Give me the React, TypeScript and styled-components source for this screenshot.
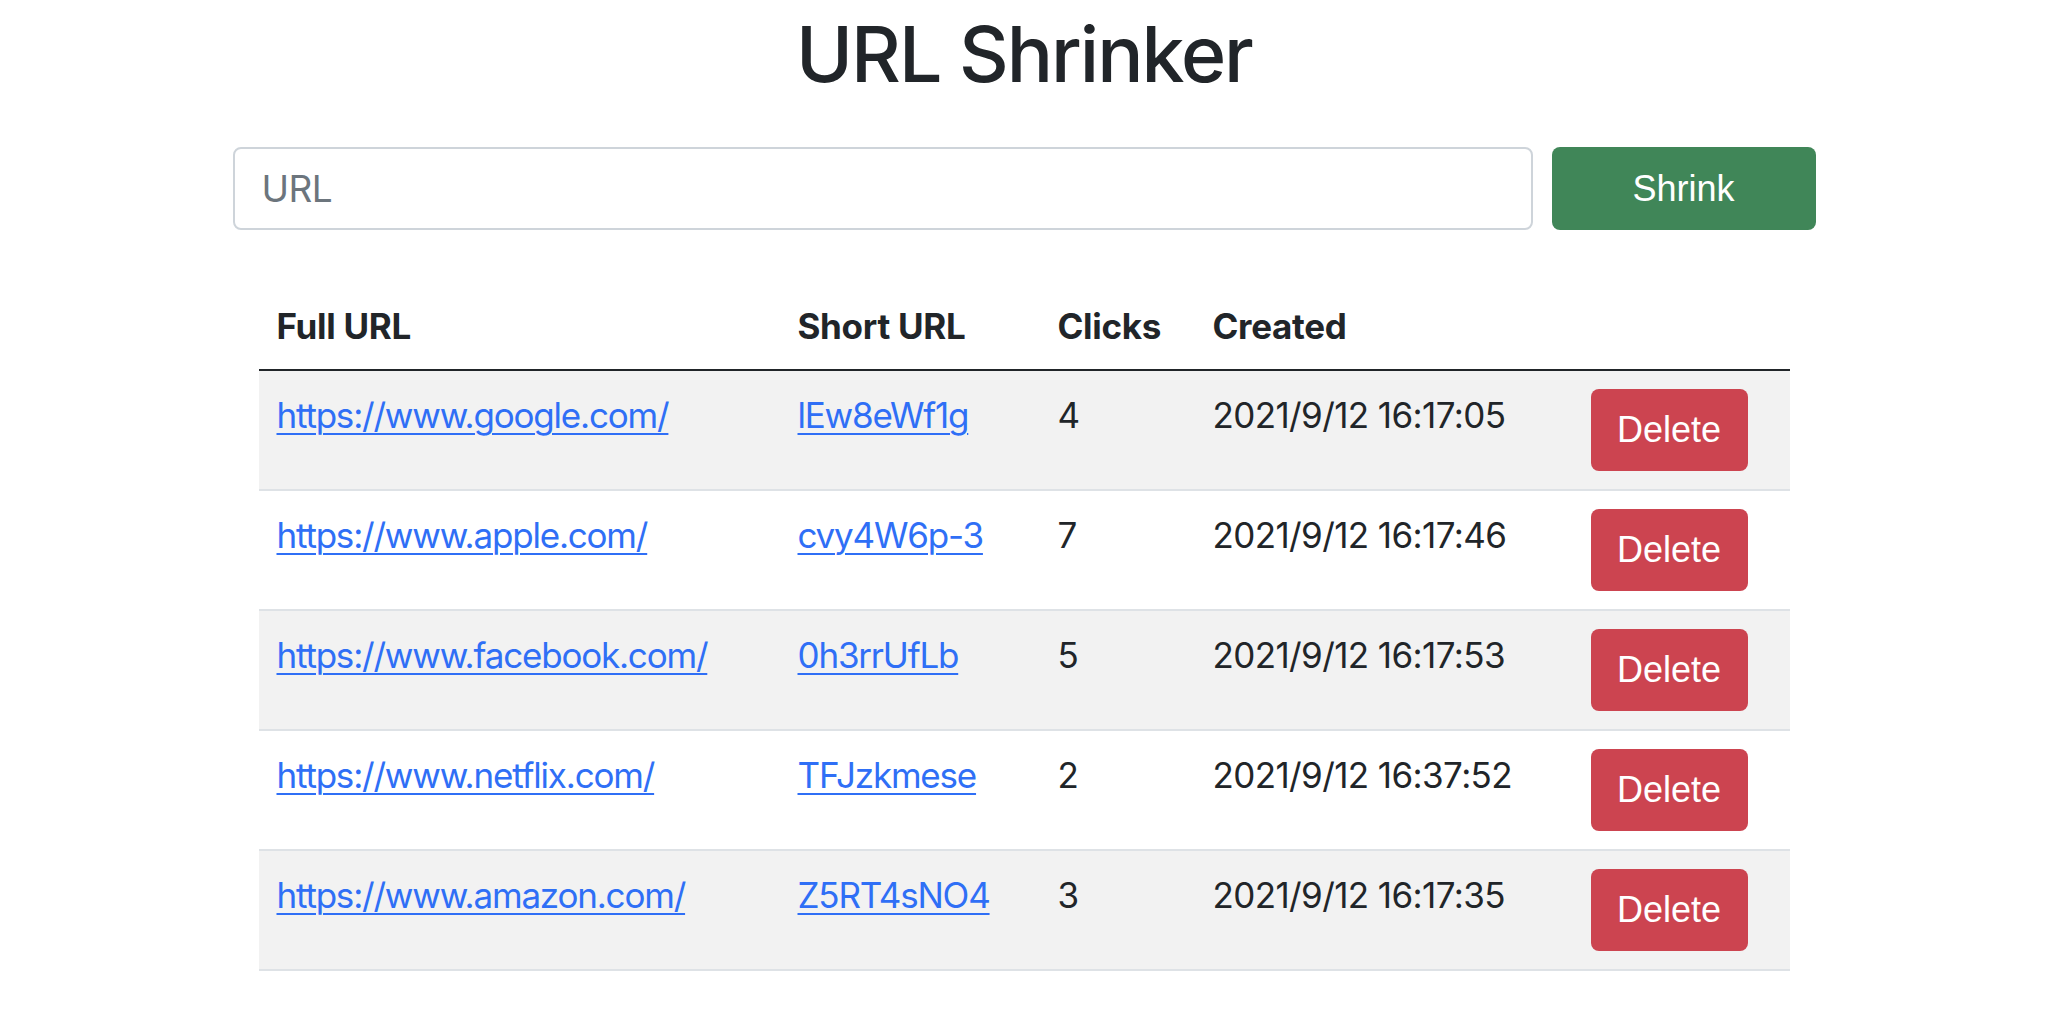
import React from "react";
import styled, { createGlobalStyle } from "styled-components";

const GlobalStyle = createGlobalStyle`
  html, body { margin: 0; padding: 0; background: #ffffff; }
  body {
    font-family: Inter, "Noto Sans", sans-serif;
    color: #212529;
    -webkit-font-smoothing: antialiased;
  }
  * { box-sizing: border-box; }
`;

const Page = styled.main`
  width: 2048px;
  display: flex;
  flex-direction: column;
  align-items: center;
`;

const Title = styled.h1`
  margin: 0;
  padding-top: 7px;
  font-family: Inter, sans-serif;
  font-weight: 500;
  font-size: 77px;
  line-height: 95px;
  letter-spacing: -2px;
  color: #212529;
`;

const Form = styled.form`
  width: 1583px;
  margin-top: 45px;
  display: flex;
  gap: 19px;
`;

const UrlInput = styled.input`
  flex: 1;
  height: 83px;
  padding: 0 27px;
  border: 2px solid #ced4da;
  border-radius: 8px;
  font-family: Inter, sans-serif;
  font-size: 37px;
  letter-spacing: -0.5px;
  color: #212529;
  outline: none;
  &::placeholder { color: #6c757d; }
`;

const Button = styled.button<{ $variant: "success" | "danger" }>`
  border: none;
  border-radius: 8px;
  font-family: "Liberation Sans", Arial, sans-serif;
  font-size: 36px;
  color: #ffffff;
  background: ${(p) => (p.$variant === "success" ? "#408658" : "#cc4450")};
  cursor: pointer;
`;

const ShrinkButton = styled(Button)`
  width: 264px;
  height: 83px;
`;

const DeleteButton = styled(Button)`
  width: 157px;
  height: 82px;
  display: block;
`;

const Table = styled.table`
  width: 1531px;
  margin-top: 52px;
  border-collapse: collapse;
  font-family: Inter, sans-serif;
  font-size: 35px;
  line-height: 52px;
`;

const HeadCell = styled.th<{ $w?: number }>`
  text-align: left;
  font-weight: 700;
  padding: 18px 18px 17px;
  width: ${(p) => (p.$w ? `${p.$w}px` : "auto")};
  border-bottom: 2px solid #212529;
  letter-spacing: -0.3px;
`;

const Row = styled.tr<{ $striped: boolean }>`
  background: ${(p) => (p.$striped ? "#f2f2f2" : "#ffffff")};
  border-bottom: 2px solid #dee2e6;
`;

const Cell = styled.td`
  padding: 18px 18px 18px;
  vertical-align: top;
  letter-spacing: -0.6px;
`;

const Link = styled.a`
  color: #2f6ff6;
  text-decoration: underline;
  text-decoration-thickness: 2px;
  text-underline-offset: 5px;
  letter-spacing: -1.2px;
`;

const rows = [
  { full: "https://www.google.com/", short: "lEw8eWf1g", clicks: 4, created: "2021/9/12 16:17:05" },
  { full: "https://www.apple.com/", short: "cvy4W6p-3", clicks: 7, created: "2021/9/12 16:17:46" },
  { full: "https://www.facebook.com/", short: "0h3rrUfLb", clicks: 5, created: "2021/9/12 16:17:53" },
  { full: "https://www.netflix.com/", short: "TFJzkmese", clicks: 2, created: "2021/9/12 16:37:52" },
  { full: "https://www.amazon.com/", short: "Z5RT4sNO4", clicks: 3, created: "2021/9/12 16:17:35" },
];

export default function App() {
  return (
    <>
      <GlobalStyle />
      <Page>
        <Title>URL Shrinker</Title>
        <Form onSubmit={(e) => e.preventDefault()}>
          <UrlInput type="url" placeholder="URL" />
          <ShrinkButton $variant="success" type="submit">Shrink</ShrinkButton>
        </Form>
        <Table>
          <thead>
            <tr>
              <HeadCell $w={521}>Full URL</HeadCell>
              <HeadCell $w={260}>Short URL</HeadCell>
              <HeadCell $w={155}>Clicks</HeadCell>
              <HeadCell $w={378}>Created</HeadCell>
              <HeadCell />
            </tr>
          </thead>
          <tbody>
            {rows.map((r, i) => (
              <Row key={r.short} $striped={i % 2 === 0}>
                <Cell><Link href={r.full}>{r.full}</Link></Cell>
                <Cell><Link href={"/" + r.short}>{r.short}</Link></Cell>
                <Cell>{r.clicks}</Cell>
                <Cell>{r.created}</Cell>
                <Cell><DeleteButton $variant="danger">Delete</DeleteButton></Cell>
              </Row>
            ))}
          </tbody>
        </Table>
      </Page>
    </>
  );
}
